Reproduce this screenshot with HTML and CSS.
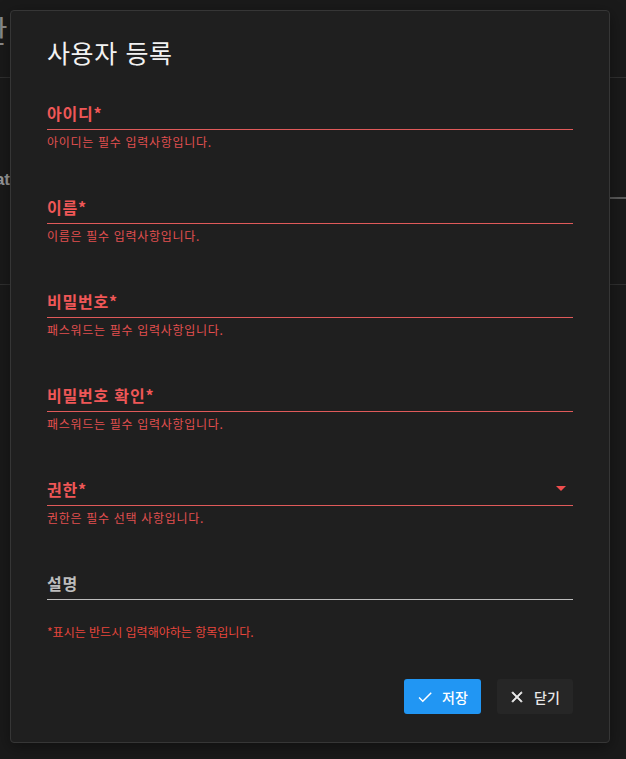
FILE: index.html
```html
<!DOCTYPE html>
<html lang="ko">
<head>
<meta charset="utf-8">
<title>사용자 등록</title>
<link rel="stylesheet" href="styles.css">
</head>
<body>
<div class="page">
  <header class="page-header"><span class="page-title">관</span></header>
  <section class="page-row">
    <div class="row-left"><span class="row-label">Stat</span></div>
    <div class="row-right"><div class="row-right-head"></div></div>
  </section>
</div>

<div class="modal" role="dialog">
  <h2 class="modal-title">사용자 등록</h2>
  <form class="form">
    <div class="field error">
      <div class="field-input"><span class="field-label">아이디*</span></div>
      <div class="field-help">아이디는 필수 입력사항입니다.</div>
    </div>
    <div class="field error">
      <div class="field-input"><span class="field-label">이름*</span></div>
      <div class="field-help">이름은 필수 입력사항입니다.</div>
    </div>
    <div class="field error">
      <div class="field-input"><span class="field-label">비밀번호*</span></div>
      <div class="field-help">패스워드는 필수 입력사항입니다.</div>
    </div>
    <div class="field error">
      <div class="field-input"><span class="field-label">비밀번호 확인*</span></div>
      <div class="field-help">패스워드는 필수 입력사항입니다.</div>
    </div>
    <div class="field error">
      <div class="field-input select"><span class="field-label">권한*</span><span class="select-arrow"></span></div>
      <div class="field-help">권한은 필수 선택 사항입니다.</div>
    </div>
    <div class="field plain">
      <div class="field-input"><span class="field-label">설명</span></div>
    </div>
    <p class="note">*표시는 반드시 입력해야하는 항목입니다.</p>
    <div class="actions">
      <button type="button" class="btn btn-primary">
        <svg class="btn-icon" viewBox="0 0 24 24"><path d="M9 16.17L4.83 12l-1.42 1.41L9 19 21 7l-1.41-1.41z"/></svg>
        <span>저장</span>
      </button>
      <button type="button" class="btn btn-dark">
        <svg class="btn-icon btn-icon-bold" viewBox="0 0 24 24"><path d="M19 6.41L17.59 5 12 10.59 6.41 5 5 6.41 10.59 12 5 17.59 6.41 19 12 13.41 17.59 19 19 17.59 13.41 12z"/></svg>
        <span>닫기</span>
      </button>
    </div>
  </form>
</div>
</body>
</html>
```

FILE: styles.css
```css
* { box-sizing: border-box; }
html, body {
  margin: 0;
  padding: 0;
  background: #1a1a1a;
  font-family: "Noto Sans CJK KR", "Noto Sans", sans-serif;
}
.page {
  width: 626px;
  height: 759px;
  overflow: hidden;
}
.page-header {
  height: 78px;
  border-bottom: 1px solid #303030;
  display: flex;
  align-items: center;
}
.page-title {
  margin-left: -20px;
  margin-top: -20px;
  font-size: 30px;
  color: #8c8c8c;
  line-height: 1;
}
.page-row {
  height: 207px;
  border-bottom: 1px solid #303030;
  display: flex;
}
.row-left {
  width: 10px;
  overflow: visible;
  display: flex;
  justify-content: flex-end;
  padding-top: 92px;
}
.row-label {
  font-family: "Liberation Sans", sans-serif;
  font-weight: bold;
  font-size: 17px;
  color: #9a9a9a;
  line-height: 20px;
  white-space: nowrap;
}
.row-right {
  flex: 1;
}
.row-right-head {
  height: 121px;
  border-bottom: 2px solid #5a5a5a;
}

.modal {
  position: absolute;
  left: 10px;
  top: 10px;
  width: 600px;
  height: 733px;
  background: #1f1f1f;
  border: 1px solid #363636;
  border-radius: 4px;
  padding: 25px 36px 0 36px;
  box-shadow: 0 4px 16px rgba(0,0,0,0.4);
}
.modal-title {
  margin: 0;
  font-size: 25px;
  line-height: 32px;
  font-weight: 400;
  letter-spacing: 0.6px;
  color: #f2f2f2;
}
.form {
  margin-top: 33px;
  display: flex;
  flex-direction: column;
}
.field {
  height: 94px;
}
.field-input {
  height: 29px;
  padding-bottom: 4px;
  border-bottom: 1px solid #bdbdbd;
  display: flex;
  align-items: flex-end;
  justify-content: space-between;
}
.field-label {
  font-size: 16px;
  line-height: 24px;
  font-weight: 700;
  letter-spacing: 0.8px;
  color: #bdbdbd;
}
.field.error .field-input { border-bottom-color: #e05a5a; }
.field.error .field-label { color: #ef5757; }
.field-help {
  margin-top: 4px;
  font-size: 12px;
  line-height: 16px;
  letter-spacing: 0.7px;
  color: #e24f4f;
}
.select-arrow {
  width: 0;
  height: 0;
  border-left: 5px solid transparent;
  border-right: 5px solid transparent;
  border-top: 5px solid #f04d4d;
  margin-right: 7px;
  margin-bottom: 10px;
}
.field.plain {
  height: 26px;
}
.note {
  margin: 0;
  margin-top: 27px;
  font-size: 12px;
  line-height: 16px;
  color: #e8463c;
}
.actions {
  margin-top: 39px;
  display: flex;
  justify-content: flex-end;
  gap: 16px;
}
.btn {
  height: 35px;
  border: none;
  border-radius: 3px;
  display: flex;
  align-items: center;
  gap: 8px;
  font-family: "Noto Sans CJK KR", sans-serif;
  font-size: 14px;
  font-weight: 500;
  color: #fff;
  cursor: pointer;
}
.btn-icon {
  width: 18px;
  height: 18px;
  fill: currentColor;
}
.btn-icon-bold path {
  stroke: currentColor;
  stroke-width: 0.9;
  stroke-linejoin: miter;
}
.btn-primary {
  width: 77px;
  padding: 0 11px 0 12px;
  background: #2196f3;
}
.btn-dark {
  width: 76px;
  padding: 0 10px 0 11px;
  background: #262626;
  color: #e8e8e8;
}
```
